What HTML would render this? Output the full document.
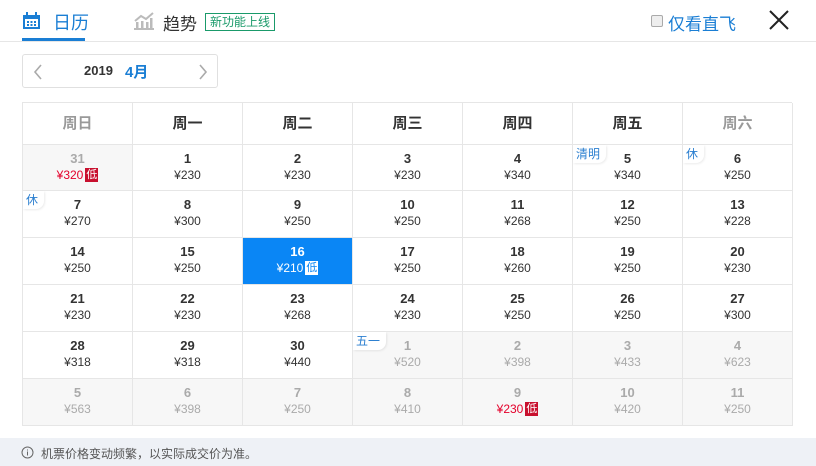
<!DOCTYPE html>
<html><head><meta charset="utf-8"><style>
body{margin:0;width:816px;height:466px;background:#fff;font-family:"Liberation Sans","Noto Sans CJK SC",sans-serif;position:relative;overflow:hidden;color:#333}
.a{position:absolute}
.g{position:absolute;left:22px;top:102px;width:770px;display:grid;grid-template-columns:repeat(7,110px);grid-template-rows:42px 46px 47px 47px 47px 47px 47px;border-left:1px solid #e6e6e6;border-top:1px solid #e6e6e6;box-sizing:border-box}
.g>div{border-right:1px solid #e6e6e6;border-bottom:1px solid #e6e6e6;text-align:center;position:relative;box-sizing:border-box}
.h{font-size:15px;font-weight:bold;line-height:41px}
.h.w{color:#999}
.c b{display:block;font-size:13px;margin-top:6px;line-height:16px;color:#333}
.c span{display:block;font-size:12px;line-height:16px;color:#333}
.c.o{background:#f7f7f7}
.c.o b,.c.o span{color:#aaa}
.c span.r{color:#e4002b}
i.d{font-style:normal;display:inline-block;background:#c8102e;color:#fff;font-size:11px;line-height:14px;padding:0 1px;margin-left:2px;vertical-align:1px}
.c.s{background:#0a86f5}
.c.s b,.c.s span{color:#fff}
.c.s i.d{background:#fff;color:#0a86f5}
.t{position:absolute;left:0;top:0;background:#fff;color:#2b7fd0;font-size:12px;line-height:18px;padding:0 6px 0 3px;border-radius:0 0 8px 0;box-shadow:1px 1px 2px rgba(0,0,0,.08);font-style:normal}
</style></head><body>
<svg class="a" style="left:22px;top:12px" width="20" height="18" viewBox="0 0 20 18"><rect x="1" y="3" width="17" height="14" fill="#1a7ed4"/><rect x="4" y="0" width="2" height="4" fill="#1a7ed4"/><rect x="13" y="0" width="2" height="4" fill="#1a7ed4"/><rect x="3" y="7" width="13" height="8" fill="#fff"/><g fill="#1a7ed4"><rect x="5" y="9" width="2" height="2"/><rect x="8.5" y="9" width="2" height="2"/><rect x="12" y="9" width="2" height="2"/><rect x="5" y="12" width="2" height="2"/><rect x="8.5" y="12" width="2" height="2"/><rect x="12" y="12" width="2" height="2"/></g></svg>
<div class="a" style="left:53px;top:9px;font-size:18px;color:#1a7ed4">日历</div>
<div class="a" style="left:22px;top:38px;width:63px;height:3px;background:#1a7ed4"></div>
<svg class="a" style="left:134px;top:12px" width="20" height="18" viewBox="0 0 20 18"><g fill="#bbb"><rect x="0" y="16" width="20" height="2"/><rect x="2" y="10" width="2.5" height="6"/><rect x="7" y="9" width="2.5" height="7"/><rect x="12" y="10" width="2.5" height="6"/><rect x="16" y="6" width="2.5" height="10"/></g><path d="M1 9 L7 4 L12 7 L19 1" stroke="#bbb" stroke-width="2" fill="none"/></svg>
<div class="a" style="left:163px;top:10px;font-size:17px;color:#333">趋势</div>
<div class="a" style="left:205px;top:13px;border:1px solid #1a9a6a;color:#1a9a6a;font-size:12px;line-height:16px;padding:0 4px">新功能上线</div>
<div class="a" style="left:651px;top:15px;width:10px;height:10px;border:1px solid #aaa;background:#eee;border-radius:2px"></div>
<div class="a" style="left:668px;top:10px;font-size:17px;color:#1a7ed4">仅看直飞</div>
<svg class="a" style="left:768px;top:9px" width="22" height="22"><path d="M2 2 L20 20 M20 2 L2 20" stroke="#222" stroke-width="2"/></svg>
<div class="a" style="left:0;top:41px;width:816px;height:1px;background:#e6e6e6"></div>
<div class="a" style="left:22px;top:54px;width:196px;height:34px;border:1px solid #e0e0e0;border-radius:3px;box-sizing:border-box"></div>
<svg class="a" style="left:33px;top:64px" width="10" height="16"><path d="M8 1 L2 8 L8 15" stroke="#aaa" stroke-width="1.6" fill="none"/></svg>
<svg class="a" style="left:198px;top:64px" width="10" height="16"><path d="M2 1 L8 8 L2 15" stroke="#aaa" stroke-width="1.6" fill="none"/></svg>
<div class="a" style="left:84px;top:63px;font-size:13px;font-weight:bold;color:#333">2019</div>
<div class="a" style="left:125px;top:61px;font-size:15px;font-weight:bold;color:#1a7ed4">4月</div>
<div class="g">
<div class="h w">周日</div><div class="h">周一</div><div class="h">周二</div><div class="h">周三</div><div class="h">周四</div><div class="h">周五</div><div class="h w">周六</div>
<div class="c o"><b>31</b><span class="r">¥320<i class="d">低</i></span></div>
<div class="c"><b>1</b><span>¥230</span></div>
<div class="c"><b>2</b><span>¥230</span></div>
<div class="c"><b>3</b><span>¥230</span></div>
<div class="c"><b>4</b><span>¥340</span></div>
<div class="c"><i class="t">清明</i><b>5</b><span>¥340</span></div>
<div class="c"><i class="t">休</i><b>6</b><span>¥250</span></div>
<div class="c"><i class="t">休</i><b>7</b><span>¥270</span></div>
<div class="c"><b>8</b><span>¥300</span></div>
<div class="c"><b>9</b><span>¥250</span></div>
<div class="c"><b>10</b><span>¥250</span></div>
<div class="c"><b>11</b><span>¥268</span></div>
<div class="c"><b>12</b><span>¥250</span></div>
<div class="c"><b>13</b><span>¥228</span></div>
<div class="c"><b>14</b><span>¥250</span></div>
<div class="c"><b>15</b><span>¥250</span></div>
<div class="c s"><b>16</b><span>¥210<i class="d">低</i></span></div>
<div class="c"><b>17</b><span>¥250</span></div>
<div class="c"><b>18</b><span>¥260</span></div>
<div class="c"><b>19</b><span>¥250</span></div>
<div class="c"><b>20</b><span>¥230</span></div>
<div class="c"><b>21</b><span>¥230</span></div>
<div class="c"><b>22</b><span>¥230</span></div>
<div class="c"><b>23</b><span>¥268</span></div>
<div class="c"><b>24</b><span>¥230</span></div>
<div class="c"><b>25</b><span>¥250</span></div>
<div class="c"><b>26</b><span>¥250</span></div>
<div class="c"><b>27</b><span>¥300</span></div>
<div class="c"><b>28</b><span>¥318</span></div>
<div class="c"><b>29</b><span>¥318</span></div>
<div class="c"><b>30</b><span>¥440</span></div>
<div class="c o"><i class="t">五一</i><b>1</b><span>¥520</span></div>
<div class="c o"><b>2</b><span>¥398</span></div>
<div class="c o"><b>3</b><span>¥433</span></div>
<div class="c o"><b>4</b><span>¥623</span></div>
<div class="c o"><b>5</b><span>¥563</span></div>
<div class="c o"><b>6</b><span>¥398</span></div>
<div class="c o"><b>7</b><span>¥250</span></div>
<div class="c o"><b>8</b><span>¥410</span></div>
<div class="c o"><b>9</b><span class="r">¥230<i class="d">低</i></span></div>
<div class="c o"><b>10</b><span>¥420</span></div>
<div class="c o"><b>11</b><span>¥250</span></div>
</div>
<div class="a" style="left:0;top:438px;width:816px;height:28px;background:#eef1f6"></div>
<svg class="a" style="left:21px;top:446px" width="13" height="13"><circle cx="6.5" cy="6.5" r="5.5" stroke="#666" fill="none"/><rect x="6" y="5.5" width="1" height="4" fill="#666"/><rect x="6" y="3.5" width="1" height="1" fill="#666"/></svg>
<div class="a" style="left:41px;top:445px;font-size:12px;color:#555">机票价格变动频繁，以实际成交价为准。</div>
</body></html>
